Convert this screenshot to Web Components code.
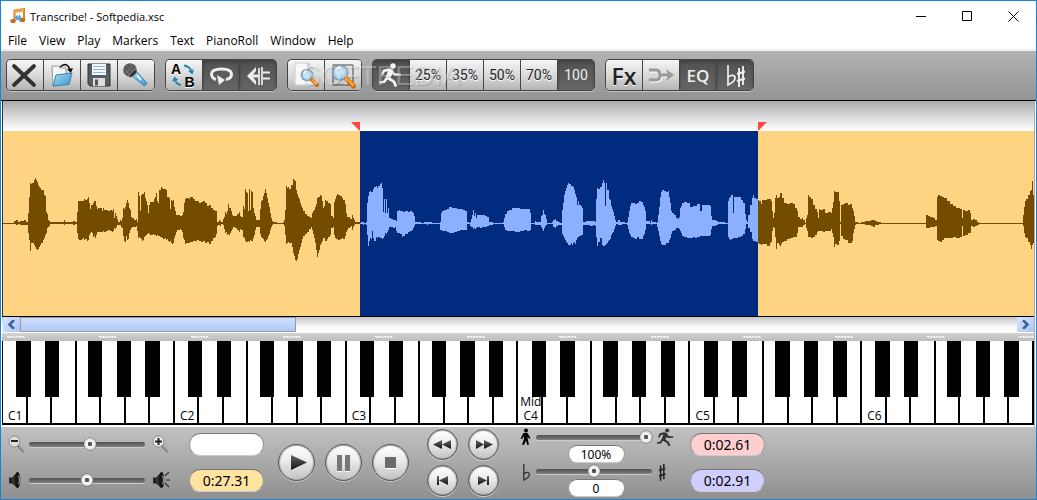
<!DOCTYPE html>
<html lang="en">
<head>
<meta charset="utf-8">
<title>Transcribe! - Softpedia.xsc</title>
<style>
html,body{margin:0;height:100%}
body{font:12px "Noto Sans","Open Sans",sans-serif;color:#000;overflow:hidden}
</style>
</head>
<body>
<transcribe-app></transcribe-app>
<script>
const define=(name,html,setup)=>{
  const t=document.createElement('template');
  t.innerHTML=html;
  customElements.define(name,class extends HTMLElement{
    connectedCallback(){
      if(this.shadowRoot)return;
      this.attachShadow({mode:'open'}).append(t.content.cloneNode(true));
      if(setup)setup(this,this.shadowRoot);
    }
  });
};

const runner='<circle cx="20" cy="6" r="2.7"/><path d="M10 9.5l6-1.2 3 1 3 4 6 .4v1.8l-7 .2-1.6-1.6-1.8 3.6 4.6 3.4 2 5.2-2.4.6-2.2-4.6-5.2-2.8-2.6 3.4-5 .6-.6-2 4.6-1 2.4-4.4 1.6-4.8-3 .6-2 3.4-1.8-.8z"/>';
const flat='<path d="M1 0v20c4-2 7-4 7-7s-4-3.500-6.500-1" fill="none" stroke="currentColor" stroke-width="1.700"/>';
const sharp='<path d="M2 2v19M6 0v19M0 8l8-2.500M0 15l8-2.500" fill="none" stroke="currentColor" stroke-width="1.900"/>';
const lens='<circle r="7.500" fill="url(#gl)" stroke="#8698a6" stroke-width="1.800"/><path d="M-4.500-2a5 5 0 0 1 5-3" fill="none" stroke="#fff" stroke-width="2"/><path d="M6.500 6.500l7 7" stroke="#c96808" stroke-width="5" stroke-linecap="round"/><path d="M7 6.500l6 6" stroke="#ffa32a" stroke-width="2.800" stroke-linecap="round"/>';
const defs='<defs><radialGradient id="gl"><stop offset="0" stop-color="#e8f8ff"/><stop offset="1" stop-color="#91c8ec"/></radialGradient><linearGradient id="bl" x2="1" y2="1"><stop offset="0" stop-color="#a8dcf6"/><stop offset="1" stop-color="#3c93c9"/></linearGradient><linearGradient id="dk" x2="0" y2="1"><stop offset="0" stop-color="#666"/><stop offset="1" stop-color="#111"/></linearGradient></defs>';
const speaker='<path d="M1 6.500h4v6H1z" fill="#222"/><path d="M4 6.500l6-6v17l-6-5z" fill="#333"/><ellipse cx="9.500" cy="9" rx="2.800" ry="8" fill="#151515"/><path d="M10.500 4.500q2 4.500 0 9" fill="none" stroke="#999" stroke-width="1.200"/>';
const icons={
notes:[16,16,'<path d="M4.500 13V2.500L14 1v10" fill="none" stroke="#d98324" stroke-width="2"/><path d="M4.500 3.500L14 2" stroke="#f0a54a" stroke-width="3"/><ellipse cx="3" cy="13" rx="2.800" ry="2" fill="#c56d17"/><ellipse cx="12.500" cy="12" rx="2.800" ry="2.200" fill="#c56d17"/><path d="M5 9l2-2 2 2v-3l3 4-3 4v-2H6z" fill="#58a4dc"/>'],
cross:[36,30,'<path d="M7 6l20 19M27 6L7 25" stroke="#333" stroke-width="3.800" stroke-linecap="round"/>'],
open:[36,30,'<path d="M8 6h6l2 2h6v16l-13 2z" fill="#f7f7f7" stroke="#999"/><path d="M9 26l3-11 16-2-3 11.500z" fill="url(#bl)" stroke="#3483b4"/><path d="M16 7q7-6 10 3" fill="none" stroke="#111" stroke-width="1.600"/><path d="M23 9.500l6-1.500-2 5z" fill="#111"/>'],
save:[36,30,'<path d="M7 4h22v22H9l-2-2z" fill="#555c63" stroke="#333"/><path d="M11 4h14v11H11z" fill="#f4f8ff"/><path d="M12 6.500h12M12 9.500h12M12 12.500h12" stroke="#8db2e2"/><path d="M12 18h12v8H12z" fill="#ddd"/><path d="M14 19.500h3v6h-3z" fill="#555"/>'],
mic:[36,30,'<path d="M14 16l4-5 11 12-2.500 3z" fill="url(#bl)" stroke="#4284ad"/><path d="M19 15l4 5" stroke="#fff" stroke-width="1.500"/><circle cx="12" cy="10" r="6.800" fill="#585858"/><path d="M8 5l9 9M6 9l7 7M12 4l6 6M7 14l9-10M10 16l8-9" stroke="#888" stroke-width=".6"/><path d="M12 17l6-6" stroke="#333" stroke-width="2"/>'],
ab:[36,30,'<text x="5" y="14" font-size="14" font-weight="700" font-family="Liberation Sans,sans-serif">A</text><text x="18.500" y="27" font-size="14" font-weight="700" font-family="Liberation Sans,sans-serif">B</text><path d="M18 5.500q6 1 7.500 6M15 25q-5-1-6-5" fill="none" stroke="#2681b5" stroke-width="1.800"/><path d="M22 11l6-1.500-1.500 5zM6 21.500l2.500-5 4 3.500z" fill="#2681b5"/>'],
loop:[36,30,'<path d="M13 19.500Q8.500 18 8.500 14q0-5 10-5t10 5q0 4.500-5.500 5.500" fill="none" stroke="#eee" stroke-width="3"/><path d="M14 15l8 5-6 5z" fill="#eee"/>'],
cue:[36,30,'<path d="M7 16l9-9v4l-3 3.500h6v3h-6l3 3.500v4z" fill="#eee"/><path d="M19 8v17M22 7v18" stroke="#eee" stroke-width="1.700"/><path d="M23 12.500h7M23 18.500h7" stroke="#eee" stroke-width="2"/>'],
page:[36,30,'<path d="M7 3h13l5 5v17H7z" fill="#f7f7f7" stroke="#ccc"/><path d="M20 3v5h5" fill="#ddd" stroke="#aaa"/><g transform="translate(19 15) scale(.75)">'+lens+'</g>'],
fit:[36,30,'<path d="M8 5h20v20H8z" fill="none" stroke="#444"/><g transform="translate(15 12.500)">'+lens+'</g>'],
run:[36,30,'<g fill="#f4f4f4">'+runner+'</g>'],
fork:[36,30,'<g fill="none" stroke="#fff" stroke-width="3" transform="translate(1 1)"><path d="M6 10h7q4 0 4 5t-4 5H6M19 15h6"/></g><g fill="none" stroke="#999" stroke-width="3"><path d="M6 10h7q4 0 4 5t-4 5H6M17 15h9"/></g><path d="M23 9l8 6-8 6 2-6z" fill="#999"/>'],
tune:[36,30,'<g color="#eee"><g transform="translate(10 5)">'+flat+'</g><g transform="translate(20 6)">'+sharp+'</g></g>'],
zout:[18,18,'<circle cx="6.500" cy="6.500" r="5.500" fill="#ddd" stroke="#888"/><path d="M3 6h7" stroke="#222" stroke-width="2"/><path d="M10 10.500l6 6.500" stroke="#666" stroke-width="2.200"/><path d="M10.500 10.500l6 6.500" stroke="#ddd" stroke-width=".8"/>'],
zin:[18,18,'<circle cx="6.500" cy="6.500" r="5.500" fill="#eee" stroke="#888"/><path d="M3 6.500h7M6.500 3v7" stroke="#222" stroke-width="2"/><path d="M10 10.500l6 6.500" stroke="#666" stroke-width="2.200"/><path d="M10.500 10.500l6 6.500" stroke="#ddd" stroke-width=".8"/>'],
soft:[18,18,speaker],
loud:[18,18,speaker+'<path d="M13 5l4-4M14 9h4M13 12l4 4" stroke="#333" stroke-width="1.200"/>'],
walk:[18,18,'<circle cx="9" cy="2.500" r="2"/><path d="M6.500 5h4l3 5-1 1-2-2.500.5 4 1 4-1.800.5L9 12.500 7 17l-2-.5L7 11V8l-2 3-1.500-.5z"/>'],
runb:[18,18,'<g fill="#333" transform="translate(-5 -2) scale(.76)">'+runner+'</g>'],
flat:[18,20,'<g color="#333" transform="translate(6 3) scale(.8)">'+flat+'</g>'],
sharp:[18,20,'<g color="#222" transform="translate(2 3) scale(.8)">'+sharp+'</g>'],
play:[35,35,'<path d="M12 10l16 7.500-16 7.500z" fill="url(#dk)"/>'],
pause:[35,35,'<path d="M11 26h5v1h-5zM19 26h5v1h-5z" fill="#fff"/><path d="M11 10h5v16h-5zM19 10h5v16h-5z" fill="#777"/>'],
stop:[35,35,'<path d="M12 23h11v1H12z" fill="#fff"/><path d="M12 12h11v11H12z" fill="#6b6b6b"/>'],
rew:[29,29,'<path d="M5 14.500l9-4.500v9zM14 14.500l9-4.500v9z" fill="url(#dk)"/>'],
fwd:[29,29,'<path d="M7 10l8 4.500L7 19zM15 10l9 4.500-9 4.500z" fill="url(#dk)"/>'],
first:[29,29,'<path d="M9 10h2v9H9zM11 14.500l9-4.500v9z" fill="url(#dk)"/>'],
last:[29,29,'<path d="M9 10l9 4.500L9 19zM18 10h2v9h-2z" fill="url(#dk)"/>']
};
define('line-icon','<style>:host{display:block;flex:none}svg{display:block}</style>',(el,r)=>{
  const [w,h,body]=icons[el.getAttribute('name')];
  const box=document.createElement('div');
  box.innerHTML=`<svg width="${w}" height="${h}" viewBox="0 0 ${w} ${h}" aria-hidden="true">${defs}${body}</svg>`;
  r.append(box);
});

define('title-bar',`<style>
:host{display:flex;align-items:center;height:30px;padding-left:9px;background:#fff}
h1{flex:1;margin:0 0 0 4px;font:11px "Open Sans",sans-serif}
button{width:46px;height:30px;padding:0;border:0;background:none;display:grid;place-items:center}
</style><line-icon name="notes"></line-icon><h1>Transcribe! - Softpedia.xsc</h1>
<button aria-label="Minimize"><svg width="11" height="11"><path d="M0 5.500h10" stroke="#000"/></svg></button>
<button aria-label="Maximize"><svg width="11" height="11"><path d="M.5.500h9v9h-9z" fill="none" stroke="#000"/></svg></button>
<button aria-label="Close"><svg width="11" height="11"><path d="M.5.500l10 10M10.500.500l-10 10" stroke="#000"/></svg></button>`);

define('menu-bar',`<style>
:host{display:block;height:18px;background:#fff;border-bottom:2px solid #f0f0f0}
nav{display:flex;padding-left:1px}
button{height:18px;padding:0 6px;border:0;background:none;font:12px/20px "Open Sans",sans-serif;color:#000}
</style><nav></nav>`,(el,r)=>{
  r.querySelector('nav').innerHTML=el.getAttribute('items').split(' ').map(t=>`<button>${t}</button>`).join('');
});

define('tool-group',`<style>
:host{display:flex;height:30px;border:1px solid #444;border-right-width:0;border-radius:5px;overflow:hidden;box-shadow:0 1px 0 #c4c4c4}
</style><slot></slot>`);
define('tool-button',`<style>
:host{display:block}
button{width:37px;height:30px;padding:0;border:0;border-right:1px solid #444;display:grid;place-items:center;background:linear-gradient(#f6f6f6,#d4d4d4 60%,#b4b4b4);color:#222;font:400 14px Roboto,sans-serif;text-shadow:0 1px 0 #fff}
:host([pressed]) button{background:linear-gradient(#505050,#666);color:#eee;text-shadow:none;box-shadow:inset 0 2px 3px #3338}
:host([big]) button{font:600 23px "Open Sans",sans-serif}
:host([mid]) button{font:600 17px "Open Sans",sans-serif}
</style><button><slot></slot></button>`,(el,r)=>{
  const b=r.querySelector('button');
  if(el.hasAttribute('label'))b.setAttribute('aria-label',el.getAttribute('label'));
  b.setAttribute('aria-pressed',el.hasAttribute('pressed'));
});
define('tool-bar',`<style>
:host{display:flex;align-items:center;gap:10px;position:relative;height:49px;padding-left:5px;background:linear-gradient(#b3b3b3,#949494);border-bottom:1px solid #000}
tool-group{margin-bottom:1px}
.mark{position:absolute;left:301px;top:8px;font:28px/34px "Liberation Sans",sans-serif;color:#fff5;text-shadow:1px 1px 1px #0002;pointer-events:none}
.mark sup{font-size:8px;vertical-align:14px;line-height:0}
</style>
<tool-group><tool-button label="Close file"><line-icon name="cross"></line-icon></tool-button><tool-button label="Open"><line-icon name="open"></line-icon></tool-button><tool-button label="Save"><line-icon name="save"></line-icon></tool-button><tool-button label="Record"><line-icon name="mic"></line-icon></tool-button></tool-group>
<tool-group><tool-button label="Swap A and B"><line-icon name="ab"></line-icon></tool-button><tool-button pressed label="Loop"><line-icon name="loop"></line-icon></tool-button><tool-button pressed label="Cue"><line-icon name="cue"></line-icon></tool-button></tool-group>
<tool-group><tool-button label="Zoom to page"><line-icon name="page"></line-icon></tool-button><tool-button label="Zoom to selection"><line-icon name="fit"></line-icon></tool-button></tool-group>
<tool-group><tool-button pressed label="Full speed"><line-icon name="run"></line-icon></tool-button><tool-button>25%</tool-button><tool-button>35%</tool-button><tool-button>50%</tool-button><tool-button>70%</tool-button><tool-button pressed>100</tool-button></tool-group>
<tool-group><tool-button big>Fx</tool-button><tool-button label="Mono"><line-icon name="fork"></line-icon></tool-button><tool-button mid pressed>EQ</tool-button><tool-button pressed label="Tuning"><line-icon name="tune"></line-icon></tool-button></tool-group>
<span class="mark">SOFTPEDIA<sup>®</sup></span>`);

/* Envelope of the recording: start column, height above and below the axis. */
const envelope=`2 0 1,14 2 1,16 3 2,18 1 1,20 2 2,24 3 2,26 1 2,28 10 10,29 26 17,30 40 28,31 39 20,32 40 20,34 43 22,35 45 24,36 43 26,37 41 27,38 38 26,39 36 24,40 35 22,41 33 20,43 33 17,44 28 15,45 27 12,46 11 10,47 9 5,48 3 4,49 2 3,50 1 1,53 1 0,63 1 1,64 3 2,65 1 0,72 1 1,73 2 2,75 1 1,77 11 10,78 22 16,79 22 17,82 22 16,83 22 15,84 24 17,85 23 16,87 24 18,88 26 17,89 20 12,90 14 10,91 18 9,92 18 10,93 20 14,94 22 13,95 22 15,96 17 12,97 14 9,98 15 9,100 15 9,102 12 9,103 15 8,104 13 9,106 13 8,108 12 7,110 13 8,112 12 9,113 14 8,114 5 5,115 10 6,116 7 4,117 4 2,118 1 2,120 3 2,121 2 4,122 5 5,123 15 13,124 14 18,125 16 19,126 20 13,127 23 17,128 20 16,129 15 10,130 13 7,131 6 5,132 5 4,134 3 4,136 4 3,137 1 8,138 31 15,139 27 14,140 12 15,141 28 16,142 29 18,143 29 17,144 31 14,145 25 13,146 22 12,147 18 11,148 10 10,149 18 11,150 21 12,153 21 11,154 24 12,155 26 12,156 30 13,157 22 12,158 20 13,159 33 13,160 33 14,161 36 14,162 35 15,163 34 16,165 34 15,166 33 17,167 26 16,168 26 18,169 25 19,170 14 18,171 23 20,172 22 21,173 23 20,174 16 15,175 12 12,176 8 9,177 8 7,180 7 6,181 7 7,182 8 9,183 11 15,184 20 17,185 24 21,186 25 20,188 25 20,189 24 20,190 26 19,193 24 18,195 22 18,197 22 17,199 20 18,201 21 19,203 22 18,205 20 20,207 17 19,209 18 21,211 15 18,213 13 15,215 12 14,216 12 11,217 1 3,218 1 2,219 3 2,220 2 3,221 1 1,223 4 2,224 6 6,225 11 10,226 9 9,227 12 12,228 19 11,229 15 12,230 15 10,231 12 8,232 8 6,233 7 4,235 7 5,237 9 7,239 11 9,240 7 6,241 6 7,243 17 14,244 14 15,245 34 18,246 31 19,247 30 19,248 12 18,249 34 19,250 13 17,251 32 18,252 31 18,253 15 15,254 10 12,255 7 7,256 3 4,259 3 4,260 14 11,261 22 14,262 23 15,263 27 16,264 30 18,265 34 19,266 30 17,267 25 16,268 20 13,269 16 11,270 10 7,271 5 4,272 2 2,273 1 1,277 0 1,283 1 1,284 3 3,285 13 12,286 37 21,287 35 20,288 36 19,289 34 20,291 38 20,292 38 24,293 44 30,294 43 33,295 42 37,296 33 38,297 29 36,298 26 31,299 24 27,300 20 24,301 17 20,302 15 16,303 12 13,305 9 11,307 7 9,309 6 6,311 5 4,312 10 7,313 12 11,314 13 15,315 16 20,316 19 27,317 25 34,318 26 30,319 26 27,320 28 22,321 27 20,322 22 18,323 15 15,324 17 15,325 23 18,326 22 18,327 22 16,328 20 14,330 19 12,331 7 5,333 5 4,334 21 12,335 24 15,336 27 16,337 29 16,338 28 17,340 27 16,342 25 15,343 23 16,345 19 13,346 10 9,347 6 7,348 6 5,350 4 4,351 4 3,352 8 7,353 5 4,354 3 2,355 1 1,358 1 1,360 0 1,361 1 1,363 1 2,364 0 1,366 1 2,367 20 12,368 27 23,369 31 18,370 32 15,371 31 16,372 31 8,373 34 15,374 36 18,376 37 14,377 35 15,378 37 14,380 39 15,381 40 15,382 35 16,383 11 15,384 24 13,385 10 10,386 24 11,387 10 9,388 15 7,389 5 4,391 4 4,393 3 5,395 3 4,396 2 8,397 12 10,399 13 10,400 12 11,402 12 14,403 11 13,405 12 11,408 11 9,410 12 8,412 11 7,413 10 5,414 7 3,415 1 1,421 0 1,424 1 1,427 1 2,428 1 1,432 0 1,440 1 7,441 10 7,442 12 8,444 13 8,447 14 9,449 16 10,452 15 10,454 15 9,457 14 8,460 14 7,463 13 7,465 12 7,467 1 1,469 0 1,470 1 3,471 4 4,472 8 4,473 13 6,474 7 5,475 10 6,476 5 5,477 8 4,480 8 5,482 8 4,485 7 4,487 6 3,489 1 2,493 0 1,503 1 1,504 5 4,505 9 7,507 12 8,509 13 8,512 15 8,515 15 9,520 14 8,524 14 7,527 14 8,530 10 7,531 0 1,535 2 2,536 1 2,540 1 2,541 7 4,542 8 6,543 13 8,544 9 5,545 8 3,546 4 2,547 0 1,552 1 1,553 3 4,555 4 5,556 2 3,558 1 2,560 0 2,562 13 11,563 20 13,564 28 15,565 32 17,566 35 19,567 38 20,568 40 22,569 39 22,571 37 20,572 37 22,573 36 20,574 33 19,575 29 21,576 26 17,577 18 15,578 22 14,579 18 13,581 17 12,582 15 12,583 1 2,586 2 2,590 2 3,593 2 2,595 1 3,596 24 14,597 35 23,598 34 19,600 36 15,602 40 22,603 43 23,604 40 23,605 17 22,606 40 21,607 33 20,608 33 18,609 24 17,610 23 16,611 17 12,612 14 10,613 11 9,614 7 6,615 3 3,616 1 1,618 3 2,620 1 2,622 1 1,625 0 1,627 1 2,628 6 6,629 12 10,630 17 12,631 20 14,633 20 15,635 19 16,637 20 14,639 22 16,641 21 16,643 18 13,644 16 11,645 12 7,646 2 1,650 0 1,651 3 2,652 1 1,656 0 1,657 1 4,658 8 8,659 16 13,660 26 18,661 31 21,662 33 22,664 32 22,666 31 20,668 32 20,669 26 17,670 20 15,671 12 11,672 10 8,674 8 7,676 5 5,678 4 5,679 6 6,680 15 8,681 17 10,682 20 13,684 21 14,687 20 15,690 16 15,693 17 14,695 17 15,697 19 14,700 12 13,702 18 13,708 18 13,710 17 12,711 7 6,712 3 3,716 2 2,718 1 1,725 0 1,728 22 14,729 25 16,730 26 17,731 28 16,733 10 15,734 26 15,738 26 14,741 23 13,743 20 11,745 9 6,746 3 1,747 1 1,748 8 5,750 18 9,752 25 16,753 28 18,754 25 18,756 24 19,758 23 20,759 22 21,761 19 22,762 23 21,764 23 21,767 24 23,770 24 20,771 22 19,772 12 8,773 5 4,774 10 5,775 25 14,776 28 26,777 25 20,779 26 22,780 30 23,781 30 21,782 25 19,784 20 18,787 19 16,790 20 15,793 19 14,795 15 14,797 12 10,798 6 4,800 4 4,802 5 4,803 3 2,805 0 1,806 5 5,807 8 8,808 28 14,809 26 14,811 24 15,813 18 14,815 14 12,817 11 9,818 5 8,819 14 8,820 13 8,823 14 9,825 10 8,828 11 8,831 10 6,832 15 10,833 21 14,834 32 24,835 31 21,837 31 22,839 22 18,840 1 1,841 18 13,843 19 16,845 20 17,848 18 20,850 19 20,852 15 18,853 12 10,854 7 6,855 1 2,856 1 0,858 0 1,861 1 1,865 2 2,868 2 2,871 3 3,873 3 4,875 2 2,877 1 2,879 1 1,881 0 1,926 8 5,928 7 5,930 6 4,933 5 4,935 3 3,937 26 17,938 28 18,940 27 19,942 26 17,944 25 15,947 22 15,950 19 15,953 17 14,956 15 15,960 14 14,962 5 3,963 13 13,965 12 12,968 13 10,970 10 10,971 3 3,973 4 4,975 3 3,977 1 2,979 0 1,1023 8 3,1024 16 10,1025 22 14,1026 24 15,1028 28 19,1030 32 22,1031 33 26,1032 42 22,1033 28 20,1034 0 0`.split(',').map(s=>s.split(' ').map(Number));
const wavePath=(a,b)=>{
  let d='';
  envelope.forEach(([x,u,l],i)=>{
    const end=envelope[i+1]?.[0];
    if(x>=a&&x<b&&end)d+=`M${x} ${92-u}H${end}V${93+l-(l?1:0)}H${x}z`;
  });
  return d;
};
define('wave-view',`<style>
:host{display:flex;flex-direction:column;flex:1;min-height:0;background:#ffd37f;border-left:1px solid #333;border-bottom:1px solid #000}
svg{display:block;width:100%}
.ruler{flex:none;height:30px;background:linear-gradient(#aaa,#d8d8d8 50%,#fff)}
.wave{flex:1;min-height:0;height:0;background:#fed381}
</style>
<svg class="ruler" viewBox="3 0 1031 30" preserveAspectRatio="none" aria-hidden="true"><path d="M351 21h9v9zM758 21h9l-9 9z" fill="#ff4646"/></svg>
<svg class="wave" viewBox="3 0 1031 185" preserveAspectRatio="none" shape-rendering="crispEdges" role="img" aria-label="Waveform"><rect x="360" width="398" height="185" fill="#002b7f"/><path class="out" fill="#734c00"/><path class="in" fill="#8cafff"/></svg>`,(el,r)=>{
  r.querySelector('.out').setAttribute('d',wavePath(0,360)+wavePath(758,1034));
  r.querySelector('.in').setAttribute('d',wavePath(360,758));
});

define('scroll-strip',`<style>
:host{display:flex;height:16px;padding-left:1px;background:linear-gradient(#c4c4c4,#f8f8f8 60%,#fff)}
button{width:17px;height:15px;padding:0;border:0;background:linear-gradient(135deg,#d8e4ff,#a9c4f8);display:grid;place-items:center}
.track{flex:1;display:flex}
.thumb{width:27.5%;height:13px;border:1px solid #999;background:linear-gradient(#d0dffd,#afc9f9)}
path{fill:none;stroke:#3f5f8d;stroke-width:2.500}
</style><button aria-label="Scroll left"><svg width="9" height="9"><path d="M7 0L2.500 4.500 7 9"/></svg></button><div class="track"><div class="thumb"></div></div><button aria-label="Scroll right"><svg width="9" height="9"><path d="M2 0l4.500 4.500L2 9"/></svg></button>`);

define('split-grip',`<style>:host{display:block;height:8px;background:linear-gradient(#d2d2d2,#bdbdbd)}svg{display:block;width:100%;height:8px}</style>
<svg aria-hidden="true"><defs><pattern id="g" width="92" height="8" patternUnits="userSpaceOnUse"><path d="M5 3h2M8 3h2M11 3h2M14 3h2M17 3h2M20 3h2" transform="translate(0 .5)" stroke="#fff"/><path d="M6 4h2M9 4h2M12 4h2M15 4h2M18 4h2M21 4h2" transform="translate(0 .5)" stroke="#eee"/></pattern></defs><rect width="100%" height="8" fill="url(#g)"/></svg>`);

define('piano-octave',`<style>
:host{display:grid;flex:1;grid-template:100%/100%}
.white,.black{grid-area:1/1;display:grid;min-width:0}
.white{grid-template-columns:repeat(7,1fr)}
.white i{border-right:2px solid #000}
.black{grid-template-columns:repeat(12,1fr);height:56px;margin:0 1px 0 -1px}
.black b{background:#000}
span{grid-area:1/1;align-self:end;justify-self:start;width:calc(100%/7);text-align:center;font:12px/14px "Open Sans",sans-serif;white-space:pre-line}
</style><div class="white"><i></i><i></i><i></i><i></i><i></i><i></i><i></i></div>
<div class="black"><b style="grid-column:2"></b><b style="grid-column:4"></b><b style="grid-column:7"></b><b style="grid-column:9"></b><b style="grid-column:11"></b></div><span><slot></slot></span>`);
define('piano-keys',`<style>
:host{display:flex;height:82px;background:#fff;border-left:1px solid #000;border-bottom:2px solid #000;margin-bottom:2px}
</style><piano-octave>C1</piano-octave><piano-octave>C2</piano-octave><piano-octave>C3</piano-octave><piano-octave>Mid
C4</piano-octave><piano-octave>C5</piano-octave><piano-octave>C6</piano-octave>`);

define('range-slider',`<style>
:host{display:flex;align-items:center;gap:3px}
::slotted([slot=to]){margin-left:4px}
input{-webkit-appearance:none;appearance:none;width:116px;height:14px;margin:0;background:none}
input::-webkit-slider-runnable-track{height:5px;border-radius:3px;background:linear-gradient(#505050,#808080);box-shadow:0 1px 0 #ccc}
input::-webkit-slider-thumb{-webkit-appearance:none;width:12px;height:12px;margin-top:-4px;border-radius:50%;background:radial-gradient(#555 0 2px,#f4f4f4 2.500px 4px,#ccc 6px);box-shadow:0 0 0 .5px #555}
</style><slot name="from"></slot><input type="range" min="0" max="100"><slot name="to"></slot>`,(el,r)=>{
  const i=r.querySelector('input');i.value=el.getAttribute('value');i.setAttribute('aria-label',el.getAttribute('label'));
});
define('value-field',`<style>
:host{display:block}
input{display:block;box-sizing:border-box;width:75px;height:23px;border:1px solid #9a9a9a;border-top-color:#777;border-bottom-color:#ccc;border-radius:12px;padding:0;text-align:center;font:14px "Noto Sans",sans-serif;color:#000;background:var(--fill,#fff)}
:host([small]) input{width:57px;height:18px;border-radius:9px;font-size:12px}
</style><input type="text">`,(el,r)=>{
  const i=r.querySelector('input');i.value=el.getAttribute('value')||'';i.setAttribute('aria-label',el.getAttribute('label'));
});
define('round-button',`<style>
:host{display:block}
button{width:37px;height:37px;padding:0;border:1px solid #555;border-radius:50%;display:grid;place-items:center;background:linear-gradient(#fff,#eee 40%,#c2c2c2);box-shadow:0 1px 0 #ccc,inset 0 0 1px 1px #aaa}
:host([small]) button{width:31px;height:31px}
</style><button><slot></slot></button>`,(el,r)=>r.querySelector('button').setAttribute('aria-label',el.getAttribute('label')));

define('transport-panel',`<style>
:host{display:flex;align-items:center;height:70px;padding:0 0 2px 7px;background:linear-gradient(#c2c2c2,#8f8f8f)}
div{display:flex}
.col{flex-direction:column;gap:18px}
.fields{flex-direction:column;gap:13px;margin-left:19px}
.main{gap:10px;margin-left:14px}
.small{display:grid;grid-template-columns:31px 31px;gap:5px 10px;margin-left:18px}
.rates{flex-direction:column;margin-left:18px;padding-top:2px}
.rates value-field{align-self:center}
.rates range-slider{height:16px;gap:1px}
.last{margin-left:15px}
</style>
<div class="col"><range-slider value="53" label="Zoom"><line-icon slot="from" name="zout"></line-icon><line-icon slot="to" name="zin"></line-icon></range-slider>
<range-slider value="50" label="Volume"><line-icon slot="from" name="soft"></line-icon><line-icon slot="to" name="loud"></line-icon></range-slider></div>
<div class="fields"><value-field label="Marker"></value-field><value-field label="Position" value="0:27.31" style="--fill:#ffe3a0"></value-field></div>
<div class="main"><round-button label="Play"><line-icon name="play"></line-icon></round-button><round-button label="Pause"><line-icon name="pause"></line-icon></round-button><round-button label="Stop"><line-icon name="stop"></line-icon></round-button></div>
<div class="small"><round-button small label="Rewind"><line-icon name="rew"></line-icon></round-button><round-button small label="Forward"><line-icon name="fwd"></line-icon></round-button><round-button small label="To start"><line-icon name="first"></line-icon></round-button><round-button small label="To end"><line-icon name="last"></line-icon></round-button></div>
<div class="rates"><range-slider value="100" label="Speed"><line-icon slot="from" name="walk"></line-icon><line-icon slot="to" name="runb"></line-icon></range-slider><value-field small label="Speed percent" value="100%"></value-field>
<range-slider value="50" label="Pitch"><line-icon slot="from" name="flat"></line-icon><line-icon slot="to" name="sharp"></line-icon></range-slider><value-field small label="Pitch shift" value="0"></value-field></div>
<div class="fields last"><value-field label="Selection start" value="0:02.61" style="--fill:#ffcfcf"></value-field><value-field label="Selection length" value="0:02.91" style="--fill:#cfcfff"></value-field></div>`);

define('transcribe-app',`<style>
:host{display:flex;flex-direction:column;box-sizing:border-box;height:100vh;min-height:400px;border:1px solid #1a82d4;background:#fff}
main{display:flex;flex-direction:column;flex:1;min-height:0;margin:0 1px 0 1px;border-right:1px solid #aaa}
</style>
<title-bar></title-bar>
<menu-bar items="File View Play Markers Text PianoRoll Window Help"></menu-bar>
<tool-bar></tool-bar>
<main><wave-view></wave-view><scroll-strip></scroll-strip><split-grip></split-grip><piano-keys></piano-keys></main>
<transport-panel></transport-panel>`);
</script>
</body>
</html>
